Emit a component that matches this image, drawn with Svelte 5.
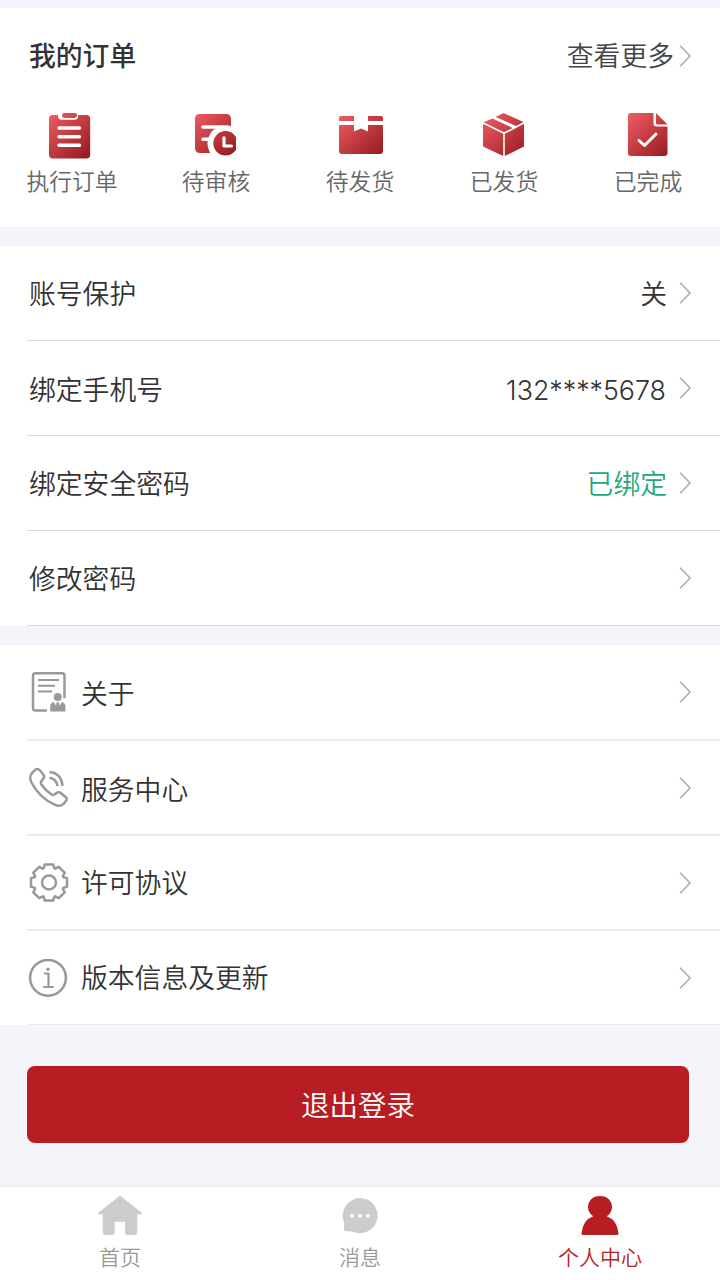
<script lang="ts">
  const orders = [
    { icon: 'list', label: '执行订单' },
    { icon: 'review', label: '待审核' },
    { icon: 'pending', label: '待发货' },
    { icon: 'shipped', label: '已发货' },
    { icon: 'done', label: '已完成' },
  ];

  const account = [
    { label: '账号保护', value: '关' },
    { label: '绑定手机号', value: '132****5678', phone: true },
    { label: '绑定安全密码', value: '已绑定', bound: true },
    { label: '修改密码', value: '' },
  ];

  const more = [
    { icon: 'about', label: '关于', low: true },
    { icon: 'service', label: '服务中心', low: true },
    { icon: 'license', label: '许可协议' },
    { icon: 'version', label: '版本信息及更新' },
  ];

  const tabs = [
    { icon: 'home', label: '首页' },
    { icon: 'message', label: '消息' },
    { icon: 'user', label: '个人中心' },
  ];

  // one tooth, turned eight times round the centre
  const tooth = [
    [-5.4, -14.2],
    [-4.2, -18],
    [4.2, -18],
    [5.4, -14.2],
  ];
  const gear = Array.from({ length: 8 }, (_, i) => {
    const a = (i * Math.PI) / 4;
    return tooth
      .map(([x, y]) => {
        const px = 21 + x * Math.cos(a) - y * Math.sin(a);
        const py = 20.5 + x * Math.sin(a) + y * Math.cos(a);
        return `${px.toFixed(2)},${py.toFixed(2)}`;
      })
      .join(' ');
  }).join(' ');

  let active = $state('user');
</script>

{#snippet chevron()}
  <svg class="chevron" width="13" height="24" viewBox="0 0 13 24">
    <path d="M1.2 1.8 11 12 1.2 22.2" fill="none" stroke="#aaa" stroke-width="1.5" />
  </svg>
{/snippet}

<div class="page">
  <section class="orders">
    <header class="orders-header">
      <h2>我的订单</h2>
      <a href="#orders" class="see-more"><span>查看更多</span>{@render chevron()}</a>
    </header>
    <div class="order-list">
      {#each orders as order (order.icon)}
        <a href="#{order.icon}" class="order">
          <svg class="order-icon {order.icon}" width="48" height="48" viewBox="0 0 48 48">
            <defs>
              <linearGradient id="red-{order.icon}" gradientUnits="userSpaceOnUse" x1="4" y1="4" x2="44" y2="46">
                <stop offset="0" stop-color="#ee5d62" />
                <stop offset="1" stop-color="#941b20" />
              </linearGradient>
            </defs>
            <g fill="url(#red-{order.icon})">
              {#if order.icon === 'list'}
                <path d="M9 4h5v1q0 3.800 3.800 3.800h12.600Q34.200 8.800 34.200 5V4h8q4 0 4 4v35.500q0 4-4 4H9q-4 0-4-4V8q0-4 4-4z" />
                <rect x="18" y="2" width="15" height="5" rx="2.400" />
                <path d="M15 17h20.500M15 25.700h20.500M15 34.300h20.500" class="cut" stroke-width="3.400" />
              {:else if order.icon === 'review'}
                <path d="M12 3h26q5 0 5 5v9L22 42H12q-5 0-5-5V8q0-5 5-5z" />
                <path d="M15 16h20M15 28.300h6" class="cut" stroke-width="3.600" />
                <circle cx="37.500" cy="32.300" r="18" fill="#fff" />
                <circle cx="37.500" cy="32.300" r="12.200" />
                <path d="M36 26.800v8.200h7.400" class="cut" stroke-width="3.200" />
              {:else if order.icon === 'pending'}
                <path d="M5 5h13v5H3V7q0-2 2-2zM32 5h13q2 0 2 2v3H32zM3 14h15v6.500l7-3 7 3V14h15v26q0 3-3 3H6q-3 0-3-3z" />
              {:else if order.icon === 'shipped'}
                <path d="M15.500 6 23.500 2 43.500 11 36 15zM12.500 7.500 32.500 17 24 21.200 3.500 11.200zM3 12.800 23.200 22.800v22.200L3 35.500zM24.800 22.800 44 12.800v22.700L24.800 45z" />
              {:else}
                <path d="M6 2h23.500v10.500q0 3 3 3H43.500V42q0 3-3 3H7q-3 0-3-3V4.500Q4 2 6 2zM32 2 43.500 13.500H33.500q-1.500 0-1.500-1.500z" />
                <path d="m15 29.500 5.500 5L32 23" class="cut" stroke-width="3" />
              {/if}
            </g>
          </svg>
          <span>{order.label}</span>
        </a>
      {/each}
    </div>
  </section>

  <section class="account">
    {#each account as item (item.label)}
      <a href="#account" class="row">
        <span class="label" class:low={item.phone}>{item.label}</span>
        <span class="value" class:phone={item.phone} class:bound={item.bound}>{item.value}</span>
        {@render chevron()}
      </a>
    {/each}
  </section>

  <section class="more">
    {#each more as item (item.icon)}
      <a href="#{item.icon}" class="row">
        <svg class="row-icon" width="42" height="42" viewBox="0 0 42 42">
          {#if item.icon === 'about'}
            <path d="M19 39.400H7.500q-2.500 0-2.500-2.500V4.800q0-2.500 2.500-2.500H34q2.500 0 2.500 2.500V27" />
            <path d="M10 9h21M10 14.700h17M10 20.600h14" stroke-width="2" />
            <g class="solid">
              <circle cx="29.800" cy="26" r="4" />
              <path d="M22.200 40.500v-5.500q0-3 3.600-4L29.800 38l4-7q3.600 1 3.600 4v5.500zM28.600 31.200h2.400l.7 5-1.900 2.300-1.900-2.300z" />
            </g>
          {:else if item.icon === 'service'}
            <path d="M4.500 5.500 7.500 2.600q2.300-1.500 4.300.6l3.700 4.600q1.300 2-.4 4.200l-1.800 2.300q-1 1.600.3 3.400 4.200 6.200 10 9.800 1.900 1.200 3.500-.5l1.700-1.300q1.800-1.100 3.700.1l5.300 4.400q1.600 1.700.3 3.600l-2.800 3.300q-3.500 3-8.600.5Q11.500 31 3.500 15.500 .5 9.500 4.500 5.500z" />
            <path d="M21.500 5q11.800 1 13 14M21.500 10.800q7 1 8 8.200" />
          {:else if item.icon === 'license'}
            <polygon points={gear} />
            <circle cx="21" cy="20.500" r="7" />
          {:else}
            <circle cx="20" cy="20.800" r="17.900" />
            <path d="M16 16.500h4.500V30M15.200 30h10.600" stroke-width="2.200" />
            <circle cx="20" cy="12.300" r="1.700" class="solid" />
          {/if}
        </svg>
        <span class="label" class:low={item.low}>{item.label}</span>
        {@render chevron()}
      </a>
    {/each}
  </section>

  <div class="logout-wrapper">
    <button class="logout">退出登录</button>
  </div>

  <nav class="tabs">
    {#each tabs as tab (tab.icon)}
      <button class="tab" class:active={active === tab.icon} onclick={() => (active = tab.icon)}>
        <svg width="48" height="44" viewBox="0 0 48 44" fill="currentColor">
          {#if tab.icon === 'home'}
            <path d="M23 1.600q1-.800 2 0L45.500 17.500q1.200 1.500-.5 1.700h-3.700V37q0 3-3 3H32q-3 0-3-3V26.700H18.700V37q0 3-3 3H9.700q-3 0-3-3V19.200H3q-1.700-.2-.5-1.700z" />
          {:else if tab.icon === 'message'}
            <path d="M24 3a17.600 17.600 0 1 1-5.800 34.200q-2-1-4-1H10q-2 0-2-2v-7A17.600 17.600 0 0 1 24 3z" />
            <g fill="#fff">
              <circle cx="16" cy="20.800" r="1.900" />
              <circle cx="24" cy="20.800" r="1.900" />
              <circle cx="31.800" cy="20.800" r="1.900" />
            </g>
          {:else}
            <path d="M24 1.200a10.800 10.800 0 0 1 6.800 20Q41.500 25 42.500 38.500q0 1.500-1.500 1.500H7q-1.500 0-1.500-1.500Q6.500 25 17.200 21.200A10.800 10.800 0 0 1 24 1.200z" />
          {/if}
        </svg>
        <span>{tab.label}</span>
      </button>
    {/each}
  </nav>
</div>

<style>
  :global(body) {
    background: #f3f5fa;
  }

  .page {
    display: flex;
    flex-direction: column;
    box-sizing: border-box;
    width: 720px;
    height: 1280px;
    padding-top: 8px;
    overflow: hidden;
    background: #f3f5fa;
    color: #333;
    font-family: 'Noto Sans CJK SC', sans-serif;
    font-size: 26.8px;
    font-weight: 350;
    line-height: 40px;
  }

  a {
    color: inherit;
    text-decoration: none;
  }

  button {
    border: none;
    font-family: inherit;
    font-weight: inherit;
    cursor: pointer;
  }

  svg {
    display: block;
    flex-shrink: 0;
  }

  section {
    background: #fff;
  }

  .orders {
    height: 219px;
    margin-bottom: 19px;
  }

  .orders-header {
    display: flex;
    justify-content: space-between;
    padding: 27px 28px 0 29px;
  }

  h2 {
    margin: 0;
    font-size: inherit;
    font-weight: 500;
  }

  .see-more {
    display: flex;
    align-items: center;
    gap: 5px;
    color: #444;
  }

  .see-more .chevron {
    padding-top: 1px;
  }

  .order-list {
    display: grid;
    grid-template-columns: repeat(5, 144px);
    margin-top: 36px;
  }

  .order {
    display: flex;
    flex-direction: column;
    align-items: center;
    color: #666;
    font-size: 22.8px;
    line-height: 34px;
  }

  .order-icon {
    margin-bottom: 5px;
  }

  .order-icon.list,
  .order-icon.review {
    margin-right: 8px;
  }

  .cut {
    fill: none;
    stroke: #fff;
    stroke-linecap: round;
    stroke-linejoin: round;
  }

  .row {
    display: flex;
    align-items: center;
    box-sizing: border-box;
    height: 95px;
    margin-left: 27px;
    padding: 0 28px 0 2px;
    border-bottom: 1px solid #dcdcdc;
  }

  .label,
  .value {
    padding-bottom: 1px;
  }

  .label.low {
    padding: 2px 0 0;
  }

  .chevron {
    margin-left: auto;
  }

  .value {
    margin-left: auto;
  }

  .value + .chevron {
    margin-left: 12px;
  }

  .phone {
    padding: 4px 1px 0 0;
    font-family: Inter, sans-serif;
    font-size: 26.8px;
  }

  .bound {
    color: #23a77b;
  }

  .more {
    margin-top: 19px;
  }

  .more .row {
    padding-left: 1px;
    border-bottom: 2px solid #ebebeb;
  }

  .more .row:first-child {
    height: 96px;
  }

  .more .row:last-child {
    height: 94px;
    border-bottom-width: 1px;
  }

  .row-icon {
    margin-right: 11px;
    fill: none;
    stroke: #999;
    stroke-width: 2.5;
    stroke-linejoin: round;
  }

  .solid {
    fill: #999;
    stroke: none;
  }

  .logout-wrapper {
    flex: 1;
    padding: 41px 31px 0 27px;
  }

  .logout {
    display: block;
    width: 100%;
    height: 77px;
    padding: 0 0 2px;
    border-radius: 8px;
    background: #b71d23;
    color: #fff;
    font-size: 28.5px;
  }

  .tabs {
    display: grid;
    grid-template-columns: repeat(3, 1fr);
    height: 93px;
    background: #fff;
    box-shadow: 0 -1px 3px rgba(0, 0, 0, 0.03);
  }

  .tab {
    display: flex;
    flex-direction: column;
    align-items: center;
    padding: 8px 0 0;
    background: none;
    color: #999;
    font-size: 21px;
    line-height: 34px;
  }

  .tab svg {
    color: #ccc;
  }

  .tab.active,
  .tab.active svg {
    color: #b71d23;
  }
</style>
